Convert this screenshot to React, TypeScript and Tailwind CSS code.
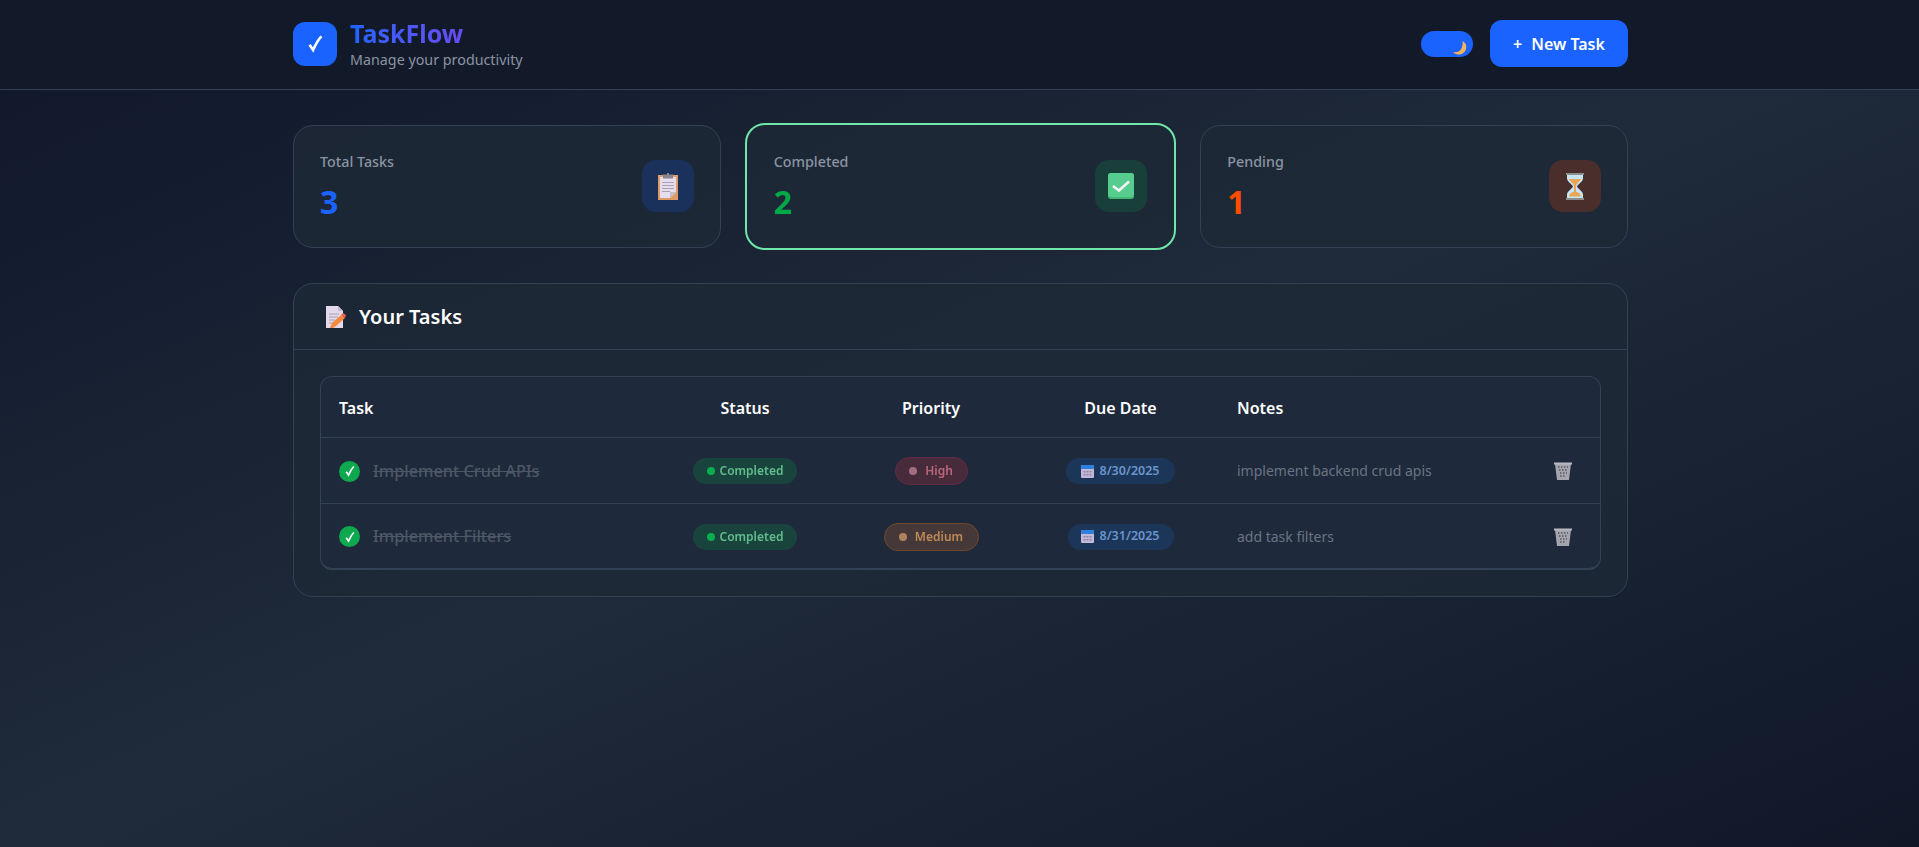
const ClipboardEmoji = () => (
  <svg width="20" height="27" viewBox="0 0 20 27">
    <rect x="0" y="2" width="20" height="25" fill="#e09a66" />
    <rect x="2" y="4" width="16" height="21" fill="#e6deec" />
    <path d="M12 25l6-6v6z" fill="#e09a66" />
    <path d="M12 25v-6h6z" fill="#c8bdd0" />
    <rect x="5" y="1.500" width="10" height="4" fill="#8a8490" />
    <rect x="9" y="0" width="2" height="3" fill="#8a8490" />
    <path d="M4 9.500h12M4 12.500h12M4 15.500h12M4 18.500h8" stroke="#a9a0b2" strokeWidth="1" />
  </svg>
);

const CheckEmoji = () => (
  <svg width="26" height="26" viewBox="0 0 26 26">
    <rect width="26" height="26" rx="3" fill="#3fb877" />
    <rect width="26" height="24" x="0" y="0" rx="3" fill="#56cd8e" />
    <path d="M5 13l6 4.500 10-9" fill="none" stroke="#f4f4f4" strokeWidth="2.600" />
  </svg>
);

const HourglassEmoji = () => (
  <svg width="20" height="27" viewBox="0 0 20 27">
    <path d="M2 2h16v3c0 4-5 6-6 8.500 1 2.500 6 4.500 6 8.500v3H2v-3c0-4 5-6 6-8.500C7 11 2 9 2 5z" fill="#c4e6f8" />
    <path d="M4 6h12c-1 3-5 4-5 7.500v5c2 1 5 2 5 5H4c0-3 3-4 5-5v-5C9 10 5 9 4 6z" fill="#eaa654" />
    <rect x="1" y="0" width="18" height="2" fill="#8c8c8c" />
    <rect x="1" y="25" width="18" height="2" fill="#8c8c8c" />
  </svg>
);

const MemoEmoji = () => (
  <svg width="20" height="22" viewBox="0 0 20 22">
    <path d="M0 0h12l5 5v17H0z" fill="#e3d9ea" />
    <path d="M12 0l5 5h-5z" fill="#c6bad0" />
    <path d="M3 8h10M3 11h9M3 14h6M3 17h4" stroke="#a9a0b2" strokeWidth="1" />
    <path d="M4 22l2-5 9-8 4 3-9 8-3 2z" fill="#f58a3c" />
    <path d="M15 9l2-2 3 2-1 3z" fill="#f2605c" />
  </svg>
);

const MoonEmoji = () => (
  <svg width="14" height="14" viewBox="0 0 14 14">
    <path d="M9.500 0C12.500 1.500 14 4.500 13 8c-1 3.500-4.500 6-8 5.500C3 13.300 1 12.500 0 11c4 1 7-.5 8.500-3.500C9.500 5 10 2.500 9.500 0z" fill="#f5b45c" />
  </svg>
);

const CalendarEmoji = () => (
  <svg width="13" height="13" viewBox="0 0 13 13">
    <rect width="13" height="13" rx="1" fill="#c3b8d6" />
    <rect width="13" height="4" rx="1" fill="#2f7fe0" />
    <path d="M2.500 6h2v1.500h-2zM5.500 6h2v1.500h-2zM8.500 6h2v1.500h-2zM2.500 9h2v1.500h-2zM5.500 9h2v1.500h-2zM8.500 9h2v1.500h-2z" fill="#8b84a6" />
  </svg>
);

const TrashEmoji = () => (
  <svg width="18" height="18" viewBox="0 0 18 18">
    <path d="M1 2h16l-2 16H3z" fill="#a4a4ac" />
    <rect x="0" y="0.500" width="18" height="2" fill="#b8b8c0" />
    <path d="M4 5h1.500M7 5h1.500M10 5h1.500M13 5h1M5 8h1.500M8 8h1.500M11 8h1.500M6 11h1.500M9 11h1.500M12 11h1M6 14h1.500M9 14h1.500" stroke="#55566a" strokeWidth="1.500" />
  </svg>
);

const Check = ({ size }: { size: number }) => (
  <svg width={size} height={size} viewBox="0 0 16 16">
    <path d="M3 9l3 4.500C8 9 10 5 13 2" fill="none" stroke="#ffffff" strokeWidth="2.200" />
  </svg>
);

const stats = [
  { label: "Total Tasks", value: "3", color: "text-[#1a63ff]", box: "bg-[#1a315c]", icon: <ClipboardEmoji /> },
  { label: "Completed", value: "2", color: "text-[#00a846]", box: "bg-[#193f3a]", icon: <CheckEmoji /> },
  { label: "Pending", value: "1", color: "text-[#ff4d00]", box: "bg-[#4a2e2b]", icon: <HourglassEmoji /> },
];

const tasks = [
  {
    name: "Implement Crud APIs",
    priority: "High",
    badge: "w-[73px] bg-[#5b2c3c] border-[#80294a] text-[#fb8396]",
    dot: "bg-[#d98a9c]",
    date: "8/30/2025",
    dateWidth: "w-[109px]",
    notes: "implement backend crud apis",
  },
  {
    name: "Implement Filters",
    priority: "Medium",
    badge: "w-[95px] bg-[#573f39] border-[#93561f] text-[#ffb460]",
    dot: "bg-[#e8aa6c]",
    date: "8/31/2025",
    dateWidth: "w-[106px]",
    notes: "add task filters",
  },
];

const cols = "grid grid-cols-[330px_188px_184px_195px_1fr_74px] items-center";

export default function App() {
  return (
    <div className="min-h-[847px] bg-gradient-to-br from-[#0f1729] via-[#1f2a3a] to-[#101828] font-['Noto_Sans',sans-serif] text-white">
      <header className="h-[90px] border-b border-[#334155] bg-[#121a29]">
        <div className="ml-[293px] flex h-[87px] w-[1335px] items-center justify-between">
          <div className="flex items-center gap-[13px]">
            <div className="flex h-11 w-11 items-center justify-center rounded-xl bg-[#1a63ff]">
              <Check size={19} />
            </div>
            <div>
              <h1 className="bg-gradient-to-r from-[#1a63ff] to-[#7c3aed] bg-clip-text text-[25px] leading-8 font-bold text-transparent">
                TaskFlow
              </h1>
              <p className="mt-px text-[14.300px] leading-5 text-[#8b93a3]">Manage your productivity</p>
            </div>
          </div>
          <div className="flex items-center gap-[17px]">
            <div className="relative h-[26px] w-[52px] rounded-full bg-[#1a63ff]">
              <span className="absolute right-[6px] bottom-[2px]">
                <MoonEmoji />
              </span>
            </div>
            <button className="flex h-[47px] w-[138px] items-center justify-center gap-[9px] rounded-xl bg-[#1a63ff] text-base font-semibold text-white">
              <span>+</span>
              <span>New Task</span>
            </button>
          </div>
        </div>
      </header>

      <main className="ml-[293px] w-[1335px] pt-[35px]">
        <div className="grid grid-cols-3 gap-[26px]">
          {stats.map((s, i) => (
            <div
              key={s.label}
              className={
                i === 1
                  ? "-m-[2px] flex items-center justify-between rounded-[20px] border-2 border-[#6ee7a8] bg-[#1e2937]/80 px-[27px]"
                  : "flex h-[123px] items-center justify-between rounded-[20px] border border-[#334155] bg-[#1e2937]/80 px-[26px]"
              }
            >
              <div>
                <p className="text-[14.300px] leading-5 font-medium text-[#8b93a3]">{s.label}</p>
                <p className={`mt-[10px] text-[32px] leading-10 font-bold ${s.color}`}>{s.value}</p>
              </div>
              <div className={`-mt-px flex h-[52px] w-[52px] items-center justify-center rounded-[14px] ${s.box}`}>{s.icon}</div>
            </div>
          ))}
        </div>

        <section className="mt-[35px] rounded-[20px] border border-[#334155] bg-[#1e2937]/80">
          <div className="flex h-[66px] items-center gap-[13px] border-b border-[#334155] px-[32px]">
            <MemoEmoji />
            <h2 className="text-xl font-semibold text-white">Your Tasks</h2>
          </div>
          <div className="p-[26px]">
            <div className="rounded-xl border border-b-2 border-[#334155] bg-[#1e293b]">
              <div className={`${cols} h-[61px] border-b border-[#334155] pt-px text-base font-semibold text-white`}>
                <div className="pl-[18px]">Task</div>
                <div className="text-center">Status</div>
                <div className="text-center">Priority</div>
                <div className="text-center">Due Date</div>
                <div className="pl-[19px]">Notes</div>
                <div />
              </div>
              {tasks.map((t, i) => (
                <div key={t.name} className={i === 0 ? `${cols} h-[66px] border-b border-[#334155] pt-px` : `${cols} h-[64px] pt-px`}>
                  <div className="flex items-center gap-[13px] pl-[18px]">
                    <span className="flex h-[21px] w-[21px] items-center justify-center rounded-full bg-[#0ea84f]">
                      <Check size={12} />
                    </span>
                    <span className="text-[16.300px] font-medium text-[#4d5766] line-through">{t.name}</span>
                  </div>
                  <div className="flex justify-center opacity-70">
                    <span className="flex h-[26px] w-[104px] items-center justify-center gap-[5px] rounded-full bg-[#17503f] text-xs font-semibold text-[#7ffaae]">
                      <span className="h-2 w-2 rounded-full bg-[#00e557]" />
                      Completed
                    </span>
                  </div>
                  <div className="flex justify-center opacity-70">
                    <span className={`flex h-7 items-center justify-center gap-2 rounded-full border text-xs font-semibold ${t.badge}`}>
                      <span className={`h-2 w-2 rounded-full ${t.dot}`} />
                      {t.priority}
                    </span>
                  </div>
                  <div className="flex justify-center">
                    <span className={`flex h-[26px] items-center justify-center gap-[5px] rounded-full bg-[#1c3659] text-[12.500px] font-semibold text-[#6a95cc] ${t.dateWidth}`}>
                      <CalendarEmoji />
                      {t.date}
                    </span>
                  </div>
                  <div className="pl-[19px] text-sm text-[#6b7483]">{t.notes}</div>
                  <div className="flex justify-center">
                    <TrashEmoji />
                  </div>
                </div>
              ))}
            </div>
          </div>
        </section>
      </main>
    </div>
  );
}
